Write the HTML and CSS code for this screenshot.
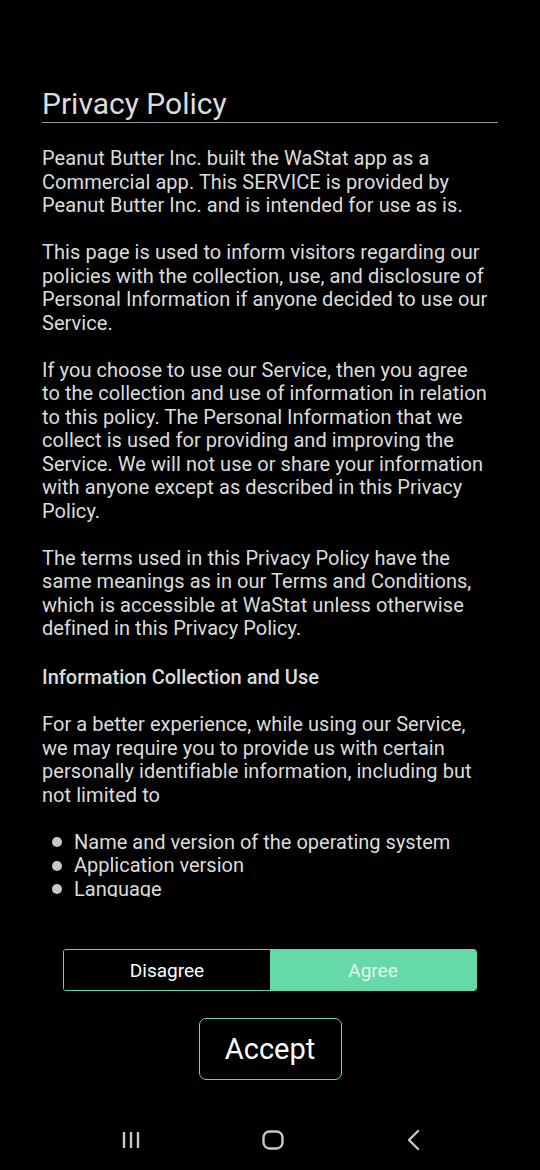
FILE: index.html
```html
<!DOCTYPE html>
<html lang="en">
<head>
    <meta charset="UTF-8">
    <meta name="viewport" content="width=device-width, initial-scale=1.0">
    <title>Privacy Policy</title>
    <link rel="stylesheet" href="styles.css">
</head>
<body>
    <div class="screen">
        <div class="policy">
            <h1>Privacy Policy</h1>
            <p>Peanut Butter Inc. built the WaStat app as a Commercial app. This SERVICE is provided by Peanut Butter Inc. and is intended for use as is.</p>
            <p>This page is used to inform visitors regarding our policies with the collection, use, and disclosure of Personal Information if anyone decided to use our Service.</p>
            <p>If you choose to use our Service, then you agree to the collection and use of information in relation to this policy. The Personal Information that we collect is used for providing and improving the Service. We will not use or share your information with anyone except as described in this Privacy Policy.</p>
            <p>The terms used in this Privacy Policy have the same meanings as in our Terms and Conditions, which is accessible at WaStat unless otherwise defined in this Privacy Policy.</p>
            <h3>Information Collection and Use</h3>
            <p>For a better experience, while using our Service, we may require you to provide us with certain personally identifiable information, including but not limited to</p>
            <ul>
                <li>Name and version of the operating system</li>
                <li>Application version</li>
                <li>Language</li>
            </ul>
        </div>

        <div class="choice">
            <button class="choice-btn">Disagree</button>
            <button class="choice-btn active">Agree</button>
        </div>

        <div class="accept-row">
            <button class="accept-btn">Accept</button>
        </div>

        <div class="navbar">
            <svg width="22" height="20" viewBox="0 0 22 20"><path d="M4 2v16M11 2v16M18 2v16" stroke="#c8c8c8" stroke-width="2.4" fill="none"/></svg>
            <svg width="24" height="24" viewBox="0 0 24 24"><rect x="2.5" y="3.5" width="19" height="17" rx="6" stroke="#c8c8c8" stroke-width="2.4" fill="none"/></svg>
            <svg width="20" height="22" viewBox="0 0 20 22"><path d="M14 2 L5 11 L14 20" stroke="#c8c8c8" stroke-width="2.4" fill="none" stroke-linecap="round" stroke-linejoin="round"/></svg>
        </div>
    </div>
</body>
</html>
```

FILE: styles.css
```css
body {
    margin: 0;
    background-color: #000;
    font-family: Roboto, "Noto Sans", sans-serif;
    color: #dcdcdc;
}
.screen {
    width: 540px;
    height: 1170px;
    display: flex;
    flex-direction: column;
}
.policy {
    height: 897px;
    overflow: hidden;
    padding: 86px 51px 0 42px;
    box-sizing: border-box;
}
h1 {
    font-size: 30px;
    font-weight: 400;
    margin: 0 -9px 0 0;
    line-height: 36px;
    border-bottom: 1px solid #9a9a9a;
}
p {
    font-size: 20px;
    line-height: 23.5px;
    letter-spacing: 0.06px;
    margin: 23.5px 0 0 0;
}
h1 + p {
    margin-top: 24px;
}
h3 {
    font-size: 20px;
    font-weight: 500;
    line-height: 23.5px;
    margin: 25px 0 0 0;
}
h3 + p {
    margin-top: 24px;
}
ul {
    list-style: none;
    margin: 23.5px 0 0 0;
    padding: 0 0 0 10px;
    font-size: 20px;
    line-height: 23.5px;
}
li {
    display: flex;
    align-items: center;
}
li::before {
    content: "";
    width: 10px;
    height: 10px;
    border-radius: 50%;
    background-color: #c8c8c8;
    margin-right: 12px;
    flex-shrink: 0;
}
.choice {
    display: flex;
    margin: 52px 0 0 63px;
    width: 414px;
    height: 42px;
    border: 1.5px solid #66d9a9;
    border-radius: 3px;
    box-sizing: border-box;
    overflow: hidden;
}
.choice-btn {
    flex: 1;
    border: none;
    background-color: #000;
    color: #fff;
    font-family: Roboto, sans-serif;
    font-size: 19px;
    padding: 0;
}
.choice-btn.active {
    background-color: #66d9a9;
    color: #e8f8f0;
}
.accept-row {
    display: flex;
    justify-content: center;
    margin-top: 27px;
}
.accept-btn {
    width: 143px;
    height: 62px;
    background-color: #000;
    border: 1.5px solid #66d9a9;
    border-radius: 7px;
    color: #fff;
    font-family: Roboto, sans-serif;
    font-size: 29px;
    padding: 0;
}
.navbar {
    display: flex;
    justify-content: space-between;
    align-items: center;
    padding: 0 116px 0 120px;
    margin-top: 48px;
    height: 24px;
}
```
